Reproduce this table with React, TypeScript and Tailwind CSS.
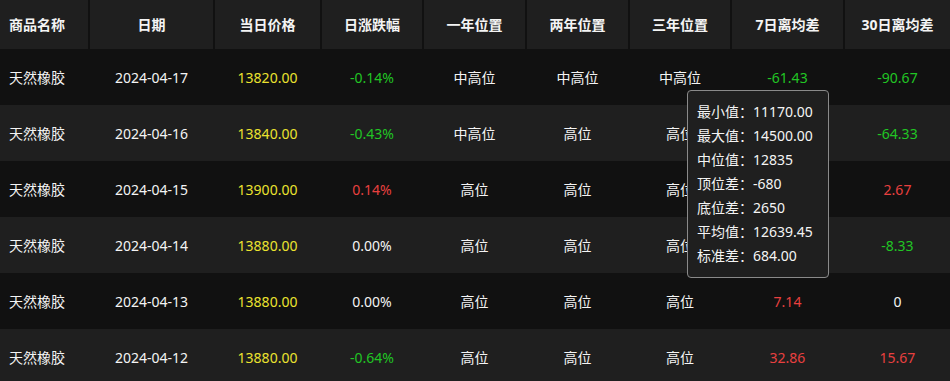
import React from 'react'

type Row = {
  name: string
  date: string
  price: string
  change: string
  y1: string
  y2: string
  y3: string
  d7: string
  d30: string
}

const rows: Row[] = [
  { name: '天然橡胶', date: '2024-04-17', price: '13820.00', change: '-0.14%', y1: '中高位', y2: '中高位', y3: '中高位', d7: '-61.43', d30: '-90.67' },
  { name: '天然橡胶', date: '2024-04-16', price: '13840.00', change: '-0.43%', y1: '中高位', y2: '高位', y3: '高位', d7: '', d30: '-64.33' },
  { name: '天然橡胶', date: '2024-04-15', price: '13900.00', change: '0.14%', y1: '高位', y2: '高位', y3: '高位', d7: '', d30: '2.67' },
  { name: '天然橡胶', date: '2024-04-14', price: '13880.00', change: '0.00%', y1: '高位', y2: '高位', y3: '高位', d7: '', d30: '-8.33' },
  { name: '天然橡胶', date: '2024-04-13', price: '13880.00', change: '0.00%', y1: '高位', y2: '高位', y3: '高位', d7: '7.14', d30: '0' },
  { name: '天然橡胶', date: '2024-04-12', price: '13880.00', change: '-0.64%', y1: '高位', y2: '高位', y3: '高位', d7: '32.86', d30: '15.67' },
]

const headers = ['商品名称', '日期', '当日价格', '日涨跌幅', '一年位置', '两年位置', '三年位置', '7日离均差', '30日离均差']

const stats = [
  ['最小值', '11170.00'],
  ['最大值', '14500.00'],
  ['中位值', '12835'],
  ['顶位差', '-680'],
  ['底位差', '2650'],
  ['平均值', '12639.45'],
  ['标准差', '684.00'],
]

// 涨跌颜色
function tone(v: string) {
  const n = parseFloat(v)
  if (n > 0) return 'text-[#e8403f]'
  if (n < 0) return 'text-[#21c524]'
  return 'text-[#f4f4f4]'
}

const grid =
  'grid grid-cols-[90px_125px_107px_102px_103px_103px_102px_113px_105px]'

export default function App() {
  return (
    <div
      className="relative w-[950px] h-[381px] overflow-hidden bg-[#111111] text-[14px] text-[#f4f4f4]"
      style={{ fontFamily: '"Noto Sans", "Noto Sans CJK SC", sans-serif' }}
    >
      <div className={`${grid} h-[49px] bg-[#1f1f1f] font-bold`}>
        {headers.map((h, i) => (
          <div
            key={h}
            className={`flex items-center ${
              i === 0 ? 'pl-[9px]' : 'justify-center'
            } ${i < headers.length - 1 ? 'border-r-2 border-[#111111]' : ''}`}
          >
            {h}
          </div>
        ))}
      </div>

      {rows.map((r, i) => (
        <div
          key={r.date}
          className={`${grid} h-[56px] items-center ${
            i % 2 === 0 ? 'bg-[#111111]' : 'bg-[#1f1f1f]'
          }`}
        >
          <div className="pl-[9px]">{r.name}</div>
          <div className="text-center pr-[2px]">{r.date}</div>
          <div className="text-center pr-[2px] text-[#ebe22f]">{r.price}</div>
          <div className={`text-center pr-[2px] ${tone(r.change)}`}>{r.change}</div>
          <div className="text-center pr-[2px]">{r.y1}</div>
          <div className="text-center pr-[2px]">{r.y2}</div>
          <div className="text-center pr-[2px]">{r.y3}</div>
          <div className={`text-center pr-[2px] ${tone(r.d7)}`}>{r.d7}</div>
          <div className={`text-center ${tone(r.d30)}`}>{r.d30}</div>
        </div>
      ))}

      {/* tooltip */}
      <div className="absolute left-[687px] top-[90px] w-[142px] rounded-[4px] border border-[#8a8a8a] bg-[#1f1f1f] px-[9px] py-[9px] leading-[24px]">
        {stats.map(([k, v]) => (
          <div key={k} className="whitespace-nowrap">
            {k}：{v}
          </div>
        ))}
      </div>
    </div>
  )
}
